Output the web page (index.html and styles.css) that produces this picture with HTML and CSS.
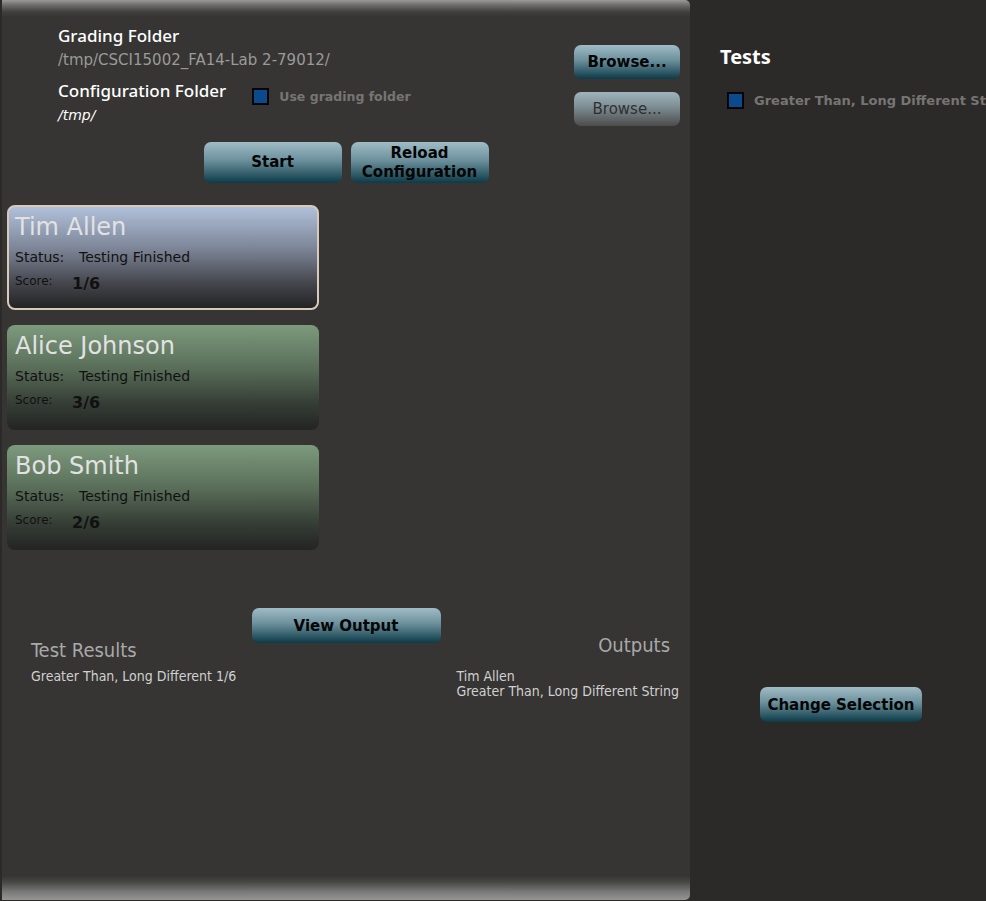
FILE: index.html
```html
<!DOCTYPE html>
<html>
<head>
<meta charset="utf-8">
<link rel="stylesheet" href="styles.css">
</head>
<body>
<div class="app">
  <main class="left">
    <section class="header">
      <div class="folders">
        <div class="label">Grading Folder</div>
        <div class="path">/tmp/CSCI15002_FA14-Lab 2-79012/</div>
        <div class="config-row">
          <div class="label">Configuration Folder</div>
          <label class="check"><span class="box"></span><span class="check-text">Use grading folder</span></label>
        </div>
        <div class="path-italic">/tmp/</div>
      </div>
      <div class="browse-col">
        <button class="btn browse">Browse...</button>
        <button class="btn browse disabled">Browse...</button>
      </div>
    </section>
    <div class="actions">
      <button class="btn action">Start</button>
      <button class="btn action two">Reload<br>Configuration</button>
    </div>
    <section class="cards">
      <div class="card blue selected">
        <div class="name">Tim Allen</div>
        <div class="status"><span class="k">Status:</span><span>Testing Finished</span></div>
        <div class="score"><span class="sk">Score:</span><span class="sv">1/6</span></div>
      </div>
      <div class="card green">
        <div class="name">Alice Johnson</div>
        <div class="status"><span class="k">Status:</span><span>Testing Finished</span></div>
        <div class="score"><span class="sk">Score:</span><span class="sv">3/6</span></div>
      </div>
      <div class="card green">
        <div class="name">Bob Smith</div>
        <div class="status"><span class="k">Status:</span><span>Testing Finished</span></div>
        <div class="score"><span class="sk">Score:</span><span class="sv">2/6</span></div>
      </div>
    </section>
    <div class="view-row"><button class="btn view">View Output</button></div>
    <section class="results">
      <div class="res-col">
        <div class="res-title">Test Results</div>
        <div class="res-line first">Greater Than, Long Different 1/6</div>
      </div>
      <div class="out-col">
        <div class="out-title">Outputs</div>
        <div class="res-line out-first">Tim Allen</div>
        <div class="res-line">Greater Than, Long Different String</div>
      </div>
    </section>
  </main>
  <aside class="right">
    <div class="tests-title">Tests</div>
    <label class="test-item"><span class="box"></span><span class="test-text">Greater Than, Long Different String</span></label>
    <button class="btn change">Change Selection</button>
  </aside>
</div>
</body>
</html>
```
FILE: styles.css
```css
* { box-sizing: border-box; }
html, body { margin: 0; padding: 0; }
body {
  width: 986px;
  height: 901px;
  overflow: hidden;
  background: #2b2a28;
  font-family: "DejaVu Sans", sans-serif;
}
.app {
  display: flex;
  height: 901px;
}
.left {
  width: 688px;
  margin-left: 2px;
  height: 900px;
  display: flex;
  flex-direction: column;
  border-radius: 0 5px 5px 0;
  background: linear-gradient(to bottom, #9a9a9a 0px, #6e6d6c 5px, #403f3d 12px, #363533 17px, #363533 calc(100% - 24px), #474746 calc(100% - 18px), #7a7a7a calc(100% - 8px), #959595 100%);
}
.header {
  display: flex;
  justify-content: space-between;
  padding: 26px 10px 0 56px;
}
.folders {
  display: flex;
  flex-direction: column;
}
.label {
  font-family: "Noto Sans", sans-serif;
  font-weight: 500;
  font-size: 17px;
  line-height: 20px;
  color: #ffffff;
}
.path {
  font-size: 15px;
  line-height: 28px;
  color: #9a9a9a;
}
.config-row {
  display: flex;
  align-items: flex-start;
  height: 20px;
  margin-top: 7px;
}
.check {
  display: flex;
  align-items: center;
  margin-left: 26px;
  margin-top: 7px;
}
.box {
  display: inline-block;
  flex-shrink: 0;
  width: 17px;
  height: 17px;
  background: #0b4a8c;
  border: 2px solid #050505;
}
.check-text {
  margin-left: 10px;
  font-size: 12.5px;
  font-weight: bold;
  color: #767574;
}
.path-italic {
  font-style: italic;
  font-size: 14px;
  line-height: 20px;
  margin-top: 4px;
  color: #ffffff;
}
.browse-col {
  display: flex;
  flex-direction: column;
  gap: 13px;
  padding-top: 19px;
}
.btn {
  border: none;
  border-radius: 7px;
  padding: 0;
  font-family: "DejaVu Sans", sans-serif;
  font-weight: bold;
  font-size: 15px;
  color: #050505;
  background: linear-gradient(to bottom, #a0bcc6 0%, #6b909c 45%, #0c3a47 100%);
  cursor: default;
}
.browse {
  width: 106px;
  height: 34px;
}
.browse.disabled {
  font-weight: normal;
  color: #303030;
  background: linear-gradient(to bottom, #9fb4bd 0%, #7c8c92 45%, #4c4c4c 100%);
}
.actions {
  display: flex;
  justify-content: center;
  gap: 9px;
  margin-top: 16px;
}
.action {
  width: 138px;
  height: 41px;
  line-height: 19px;
}
.cards {
  display: flex;
  flex-direction: column;
  gap: 15px;
  padding-left: 5px;
  margin-top: 22px;
}
.card {
  width: 312px;
  height: 105px;
  border-radius: 8px;
  padding: 7px 0 0 8px;
}
.card.blue {
  background: linear-gradient(to bottom, #b0c0da 0%, #7e8799 40%, #45474e 75%, #232323 100%);
}
.card.selected {
  border: 2px solid #d8cabb;
  padding: 6px 0 0 6px;
}
.card.green {
  background: linear-gradient(to bottom, #7d9a7d 0%, #5a6f5a 40%, #353d35 75%, #232423 100%);
}
.name {
  font-size: 24px;
  line-height: 28px;
  color: #e2e2e2;
}
.status {
  font-size: 14px;
  line-height: 20px;
  margin-top: 6px;
  color: #111111;
  display: flex;
}
.status .k {
  width: 64px;
}
.score {
  display: flex;
  align-items: baseline;
  margin-top: 6px;
  color: #111111;
}
.sk {
  font-size: 12px;
  width: 57px;
  position: relative;
  top: -4px;
}
.sv {
  font-size: 16px;
  font-weight: bold;
  line-height: 22px;
}
.view-row {
  display: flex;
  justify-content: center;
  margin-top: 58px;
}
.view {
  width: 189px;
  height: 35px;
}
.results {
  display: flex;
  justify-content: space-between;
  margin-top: -9px;
  padding: 0 11px 0 29px;
  font-family: "DejaVu Sans Condensed", "DejaVu Sans", sans-serif;
}
.res-col, .out-col {
  display: flex;
  flex-direction: column;
}
.res-title {
  font-size: 20px;
  line-height: 32px;
  color: #a9a9a9;
  font-stretch: condensed;
}
.out-title {
  font-size: 20px;
  line-height: 23px;
  color: #a9a9a9;
  text-align: right;
  margin-right: 9px;
  font-stretch: condensed;
}
.res-line {
  font-size: 14px;
  line-height: 15px;
  color: #d0d0d0;
  font-stretch: condensed;
}
.res-line.first { margin-top: 3px; }
.res-line.out-first { margin-top: 12px; }
.right {
  flex: 1;
  display: flex;
  flex-direction: column;
  padding-left: 30px;
  overflow: hidden;
}
.tests-title {
  font-family: "Noto Sans", sans-serif;
  font-weight: bold;
  font-size: 20px;
  line-height: 24px;
  margin-top: 45px;
  color: #ffffff;
}
.test-item {
  display: flex;
  align-items: center;
  margin-top: 23px;
  margin-left: 7px;
  white-space: nowrap;
}
.test-text {
  margin-left: 10px;
  font-size: 13px;
  font-weight: bold;
  color: #767574;
}
.change {
  width: 162px;
  height: 35px;
  margin-top: 578px;
  margin-left: 40px;
}
```
